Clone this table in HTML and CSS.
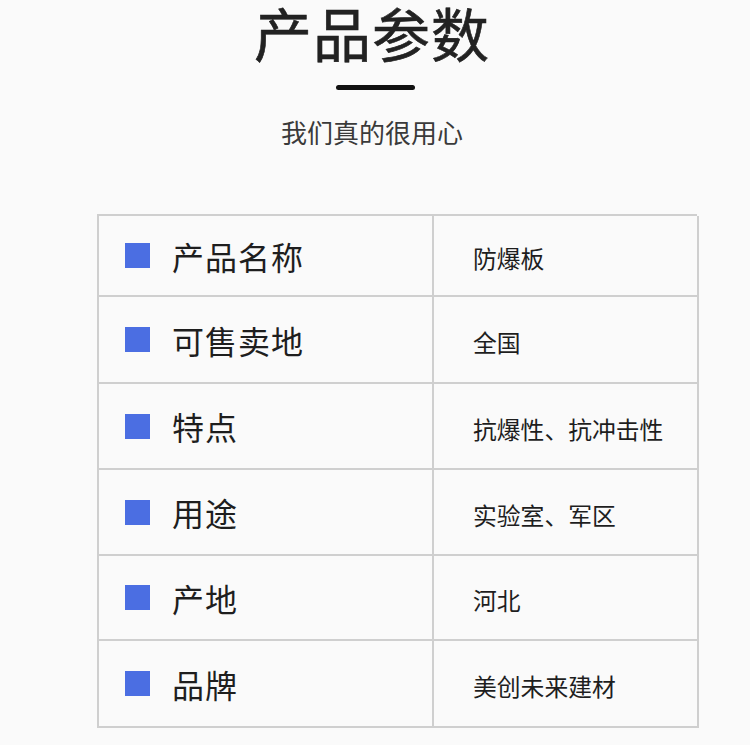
FILE: index.html
```html
<!DOCTYPE html>
<html lang="zh">
<head>
<meta charset="utf-8">
<link rel="stylesheet" href="styles.css">
</head>
<body>
<div class="page">
  <header class="head">
    <h1 class="title">产品参数</h1>
    <div class="bar"></div>
    <p class="sub">我们真的很用心</p>
  </header>
  <div class="table">
    <div class="cell key"><span class="dot"></span><span class="label">产品名称</span></div>
    <div class="cell val">防爆板</div>
    <div class="cell key"><span class="dot"></span><span class="label">可售卖地</span></div>
    <div class="cell val">全国</div>
    <div class="cell key"><span class="dot"></span><span class="label">特点</span></div>
    <div class="cell val">抗爆性、抗冲击性</div>
    <div class="cell key"><span class="dot"></span><span class="label">用途</span></div>
    <div class="cell val">实验室、军区</div>
    <div class="cell key"><span class="dot"></span><span class="label">产地</span></div>
    <div class="cell val">河北</div>
    <div class="cell key"><span class="dot"></span><span class="label">品牌</span></div>
    <div class="cell val">美创未来建材</div>
  </div>
</div>
</body>
</html>
```
FILE: styles.css
```css
html, body {
  margin: 0;
  padding: 0;
  background: #fafafa;
}
.page {
  width: 750px;
  height: 745px;
  overflow: hidden;
  font-family: "Noto Sans CJK SC", "Noto Sans", sans-serif;
}
.head {
  display: flex;
  flex-direction: column;
  align-items: center;
  padding-top: 0;
  margin-left: -6px;
}
.title {
  margin: 0;
  font-size: 58px;
  line-height: 64px;
  font-weight: 400;
  color: #222;
  letter-spacing: 1px;
  -webkit-text-stroke: 0.6px #222;
}
.bar {
  width: 79px;
  height: 5px;
  border-radius: 3px;
  background: #111;
  margin-top: 21px;
  margin-left: 6px;
}
.sub {
  margin: 29px 0 0;
  font-size: 26px;
  line-height: 26px;
  color: #3a3a3a;
}
.table {
  margin-top: 69px;
  margin-left: 97px;
  width: 600px;
  display: grid;
  grid-template-columns: 335px 265px;
  grid-template-rows: 81px 87px 86px 86px 85px 87px;
  border-top: 2px solid #cfcfcf;
  border-left: 2px solid #cfcfcf;
  box-sizing: border-box;
}
.cell {
  border-right: 2px solid #cfcfcf;
  border-bottom: 2px solid #cfcfcf;
  display: flex;
  align-items: center;
}
.key {
  padding-left: 26px;
}
.dot {
  width: 25px;
  height: 25px;
  background: #4b6ee2;
  flex: none;
}
.label {
  margin-left: 22px;
  font-size: 32px;
  color: #1e1e1e;
  letter-spacing: 1px;
}
.val {
  padding-left: 39px;
  font-size: 23.8px;
  color: #1e1e1e;
  padding-top: 4px;
}
```
